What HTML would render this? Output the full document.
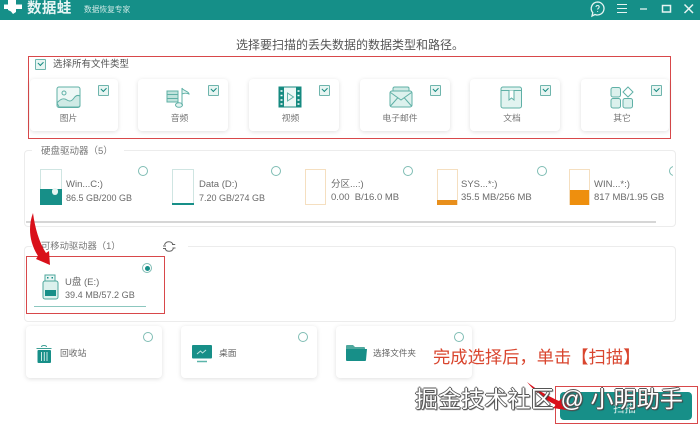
<!DOCTYPE html>
<html lang="zh-CN">
<head>
<meta charset="utf-8">
<style>
html,body{margin:0;padding:0;background:#fff}
#p{position:relative;width:700px;height:427px;overflow:hidden;background:#fff;font-family:"Liberation Sans","Noto Sans CJK SC",sans-serif;color:#666}
#p div,#p svg,#p span{position:absolute}
.t{white-space:nowrap;line-height:1.2}
.card{background:#fff;border-radius:4px;box-shadow:0 1px 5px rgba(0,0,0,.13)}
.cb{width:9px;height:9px;border:1px solid #6fb5ad;background:#e8f5f2;border-radius:1px}
.cb:after{content:"";position:absolute;left:2px;top:1px;width:4px;height:2.5px;border-left:1.2px solid #158a80;border-bottom:1.2px solid #158a80;transform:rotate(-45deg)}
.r{width:8px;height:8px;border:1px solid #7fbdb4;border-radius:50%;background:#fff}
.lab{font-size:8.8px;color:#777;text-align:center;width:60px;line-height:12px;top:112px}
.panel{border:1px solid #ececec;border-radius:4px;background:#fff;box-sizing:border-box}
.disk{width:22px;height:36px;box-sizing:border-box;border:1px solid #cfe5e2;background:#fff}
.d1{font-size:9.5px;color:#6a6a6a;line-height:12px}
.red{border:1.3px solid #d8484a;box-sizing:border-box}
</style>
</head>
<body>
<div id="p">
  <div style="left:0;top:0;width:700px;height:20px;background:#158f88"></div>
  <svg style="left:3px;top:0" width="20" height="15" viewBox="0 0 20 15"><path d="M5 0h8v4.500h6v4.500h-6v3l-3 2-2-2.500-3-1.500V9H1V4.500h4z" fill="#fff"/></svg>
  <div class="t" style="left:27px;top:0;font-size:14.5px;font-weight:bold;color:#e8f5f4;letter-spacing:.4px;line-height:19px">数据蛙</div>
  <div class="t" style="left:84px;top:4px;font-size:7.700px;color:#cfe9e6;line-height:11px">数据恢复专家</div>
  <svg style="left:588px;top:0" width="112" height="20" viewBox="0 0 112 20" fill="none" stroke="#e6f4f2" stroke-width="1.3">
    <path d="M9.500 2a6.500 6.500 0 1 1-2.500 12.500L4 16l.8-3.300A6.500 6.500 0 0 1 9.500 2z"/>
    <path d="M8 7c0-2 3.200-2 3.200 0 0 1.300-1.600 1.300-1.600 2.500M9.600 11v.9" stroke-width="1"/>
    <path d="M29 4.500h10M29 8.500h10M29 12.500h10" stroke-width="1.100"/>
    <path d="M52 9h7"/>
    <rect x="74.500" y="5.500" width="8" height="6.500" stroke-width="1.500"/>
    <path d="M96.500 4.500l8.500 8.500M105 4.500l-8.500 8.500" stroke-width="1.500"/>
  </svg>

  <div class="t" style="left:236px;top:38px;font-size:12px;color:#555;line-height:15px">选择要扫描的丢失数据的数据类型和路径。</div>

  <div class="red" style="left:28px;top:56px;width:643px;height:83px"></div>
  <div class="cb" style="left:35px;top:59px"></div>
  <div class="t" style="left:53px;top:59px;font-size:9.5px;color:#555;line-height:12px">选择所有文件类型</div>

  <div class="card" style="left:30px;top:79px;width:88px;height:52px"></div>
  <div class="card" style="left:138px;top:79px;width:90px;height:52px"></div>
  <div class="card" style="left:249px;top:79px;width:90px;height:52px"></div>
  <div class="card" style="left:360px;top:79px;width:90px;height:52px"></div>
  <div class="card" style="left:470px;top:79px;width:90px;height:52px"></div>
  <div class="card" style="left:581px;top:79px;width:88px;height:52px"></div>

  <div class="cb" style="left:98px;top:85px"></div>
  <div class="cb" style="left:208px;top:85px"></div>
  <div class="cb" style="left:319px;top:85px"></div>
  <div class="cb" style="left:430px;top:85px"></div>
  <div class="cb" style="left:540px;top:85px"></div>
  <div class="cb" style="left:651px;top:85px"></div>

  <svg style="left:56px;top:86px" width="26" height="23" viewBox="0 0 26 23" fill="none" stroke="#5fb0a6" stroke-width="1"><rect x="1" y="1" width="23" height="20.500" rx="2" fill="#eef8f6"/><circle cx="8" cy="7" r="2"/><path d="M1 17c4-5 7-5 10-3s5 1 7-2 4-3 6-2v9a2 2 0 0 1-2 2H3z" fill="#cfeae5"/></svg>
  <svg style="left:166px;top:86px" width="26" height="23" viewBox="0 0 26 23" fill="none" stroke="#5fb0a6" stroke-width="1"><rect x="1" y="5" width="11" height="11" fill="#bfe3dc"/><path d="M1 8.500h11M1 12.500h11"/><ellipse cx="13" cy="19" rx="3.500" ry="2.300" fill="#e4f4f1"/><path d="M16 19V2c1 3 7 3 7 6-2-1-5-1-7 0" fill="#e4f4f1"/></svg>
  <svg style="left:278px;top:86px" width="24" height="23" viewBox="0 0 24 23" fill="none"><rect x="1" y="1" width="22" height="20" fill="#eef8f6" stroke="#158a80"/><rect x="1" y="1" width="5" height="20" fill="#158a80"/><rect x="18" y="1" width="5" height="20" fill="#158a80"/><path d="M2.500 5h2M2.500 9.500h2M2.500 14h2M2.500 18h2M19.500 5h2M19.500 9.500h2M19.500 14h2M19.500 18h2" stroke="#fff" stroke-width="1.500"/><path d="M9.500 7l6 4-6 4z" stroke="#5fb0a6"/></svg>
  <svg style="left:389px;top:86px" width="24" height="23" viewBox="0 0 24 23" fill="none" stroke="#5fb0a6" stroke-width="1"><path d="M4 5V2.500A1.500 1.500 0 0 1 5.500 1h13A1.500 1.500 0 0 1 20 2.500V5" fill="#cfeae5"/><path d="M3 5h18a2 2 0 0 1 2 2v12a2 2 0 0 1-2 2H3a2 2 0 0 1-2-2V7a2 2 0 0 1 2-2z" fill="#dcf1ed"/><path d="M1.500 6.500L12 14l10.500-7.500M1.500 20l7.500-8.500M22.500 20L15 11.500"/></svg>
  <svg style="left:500px;top:86px" width="23" height="23" viewBox="0 0 23 23" fill="none" stroke="#5fb0a6" stroke-width="1"><rect x="1" y="1" width="20.500" height="21" rx="2" fill="#e2f3f0"/><path d="M1 4.500h20.500"/><path d="M9 4.500v9.500l2.500-2 2.500 2V4.500" fill="#fff"/></svg>
  <svg style="left:610px;top:86px" width="25" height="23" viewBox="0 0 25 23" fill="none" stroke="#5fb0a6" stroke-width="1"><rect x="1" y="1.500" width="9.500" height="9.500" rx="2" fill="#dcf1ed"/><path d="M18 1l5 5-5 5-5-5z" fill="#fff"/><rect x="1" y="12.500" width="9.500" height="9.500" rx="2" fill="#dcf1ed"/><rect x="13" y="12.500" width="9.500" height="9.500" rx="2" fill="#dcf1ed"/></svg>

  <div class="t lab" style="left:38.500px">图片</div>
  <div class="t lab" style="left:149.500px">音频</div>
  <div class="t lab" style="left:260.500px">视频</div>
  <div class="t lab" style="left:370px">电子邮件</div>
  <div class="t lab" style="left:482px">文档</div>
  <div class="t lab" style="left:592px">其它</div>

  <!-- hard disks -->
  <div class="panel" style="left:24px;top:150px;width:652px;height:77px"></div>
  <div style="left:32px;top:145px;width:92px;height:10px;background:#fff"></div>
  <div class="t" style="left:41px;top:145px;font-size:9.500px;color:#777;line-height:13px">硬盘驱动器（5）</div>
  <div style="left:26px;top:221px;width:630px;height:2px;background:#d6d6d6"></div>

  <div class="disk" style="left:40px;top:169px"></div>
  <div style="left:40px;top:189px;width:22px;height:16px;background:#178f88"></div>
  <div style="left:52px;top:188px;width:6px;height:7px;background:#e6f4f2;border-radius:3px"></div>
  <div class="r" style="left:138px;top:166px"></div>
  <div class="t d1" style="left:66px;top:179px">Win...C:)</div>
  <div class="t d1" style="left:66px;top:192px;font-size:9px">86.5 GB/200 GB</div>

  <div class="disk" style="left:172px;top:169px"></div>
  <div style="left:172px;top:203px;width:22px;height:2px;background:#178f88"></div>
  <div class="r" style="left:271px;top:166px"></div>
  <div class="t d1" style="left:199px;top:179px">Data (D:)</div>
  <div class="t d1" style="left:199px;top:192px;font-size:9px">7.20 GB/274 GB</div>

  <div class="disk" style="left:305px;top:169px;width:21px;border-color:#f5dfc0"></div>
  <div class="r" style="left:403px;top:166px"></div>
  <div class="t d1" style="left:331px;top:179px">分区...:)</div>
  <div class="t d1" style="left:331px;top:192px">0.00 &nbsp;B/16.0 MB</div>

  <div class="disk" style="left:437px;top:169px;width:21px;border-color:#f5dfc0"></div>
  <div style="left:437px;top:200px;width:20px;height:5px;background:#e88f1c"></div>
  <div class="r" style="left:537px;top:166px"></div>
  <div class="t d1" style="left:461px;top:179px">SYS...*:)</div>
  <div class="t d1" style="left:461px;top:192px">35.5 MB/256 MB</div>

  <div class="disk" style="left:569px;top:169px;width:21px;border-color:#f5dfc0"></div>
  <div style="left:570px;top:190px;width:19px;height:15px;background:#ee8f0e"></div>
  <div class="r" style="left:669px;top:166px"></div>
  <div style="left:673px;top:164px;width:20px;height:14px;background:#fff"></div>
  <div style="left:675px;top:164px;width:1px;height:14px;background:#ececec"></div>
  <div class="t d1" style="left:594px;top:179px">WIN...*:)</div>
  <div class="t d1" style="left:594px;top:192px">817 MB/1.95 GB</div>

  <!-- removable -->
  <div class="panel" style="left:24px;top:246px;width:652px;height:76px"></div>
  <div style="left:32px;top:240px;width:156px;height:10px;background:#fff"></div>
  <div class="t" style="left:41px;top:240px;font-size:9.300px;color:#777;line-height:13px">可移动驱动器（1）</div>
  <svg style="left:162px;top:240px" width="14" height="13" viewBox="0 0 14 13" fill="none" stroke="#666" stroke-width="1"><path d="M2.500 5A4.500 4.500 0 0 1 11 4.500M11.500 8A4.500 4.500 0 0 1 3 8.500"/><path d="M1 6h3M10 4.500h3.200M10.500 8h3M1 8.500h3" stroke-width=".9"/></svg>

  <div class="red" style="left:26px;top:256px;width:139px;height:58px;background:#fff"></div>
  <div style="left:142px;top:263px;width:10px;height:10px;border:1px solid #7fbdb4;border-radius:50%;box-sizing:border-box;background:#fff"></div>
  <div style="left:144.500px;top:265.500px;width:5px;height:5px;border-radius:50%;background:#178f88"></div>
  <svg style="left:41px;top:274px" width="19" height="26" viewBox="0 0 19 26" fill="none" stroke="#4ea79c" stroke-width="1"><rect x="4" y="1" width="10" height="7" fill="#eaf6f4"/><rect x="6" y="3" width="1.500" height="1.500" fill="#178f88" stroke="none"/><rect x="10.500" y="3" width="1.500" height="1.500" fill="#178f88" stroke="none"/><rect x="2" y="7" width="15" height="18" rx="2" fill="#dcf1ed"/><rect x="4" y="16" width="11" height="6" fill="#178f88" stroke="none"/></svg>
  <div class="t d1" style="left:65px;top:277px">U盘 (E:)</div>
  <div class="t d1" style="left:65px;top:289px;font-size:9.100px">39.4 MB/57.2 GB</div>
  <div style="left:34px;top:306px;width:112px;height:1px;background:#8cc7bf"></div>

  <!-- bottom cards -->
  <div class="card" style="left:26px;top:326px;width:136px;height:52px"></div>
  <div class="card" style="left:181px;top:326px;width:136px;height:52px"></div>
  <div class="card" style="left:336px;top:326px;width:136px;height:52px"></div>
  <div class="r" style="left:143px;top:332px"></div>
  <div class="r" style="left:298px;top:332px"></div>
  <div class="r" style="left:454px;top:332px"></div>
  <svg style="left:35px;top:344px" width="18" height="20" viewBox="0 0 18 20" fill="none"><path d="M1.500 4.500h15M6.500 3c0-2 5-2 5 0" stroke="#3d9f95" stroke-width="1"/><rect x="2.500" y="6" width="13.500" height="13" rx="1" fill="#178f88"/><path d="M6.500 8v9M9.300 8v9M12 8v9" stroke="#cdeae6" stroke-width="1"/></svg>
  <div class="t" style="left:60px;top:347px;font-size:8.800px;color:#666;line-height:12px">回收站</div>
  <svg style="left:192px;top:345px" width="20" height="19" viewBox="0 0 20 19" fill="none"><rect x="0" y="0" width="20" height="13.500" rx="1" fill="#178f88"/><path d="M5 9l3.500-3 2 2L14 5" stroke="#bfe5e0" stroke-width="1"/><path d="M5 16.500h10" stroke="#5cb5aa" stroke-width="1.500"/></svg>
  <div class="t" style="left:219px;top:347px;font-size:8.800px;color:#666;line-height:12px">桌面</div>
  <svg style="left:346px;top:344px" width="22" height="18" viewBox="0 0 22 18"><path d="M0 2a1 1 0 0 1 1-1h6l2 2h9a1 1 0 0 1 1 1v2H0z" fill="#4fa89e"/><path d="M0 5h21l-1 11a1 1 0 0 1-1 1H1a1 1 0 0 1-1-1z" fill="#178f88"/></svg>
  <div class="t" style="left:373px;top:348px;font-size:8.600px;color:#666;line-height:11px">选择文件夹</div>

  <!-- scan button -->
  <div style="left:560px;top:392px;width:132px;height:28px;background:#178f88;border-radius:4px"></div>
  <div class="t" style="left:613px;top:402px;font-size:11.500px;color:#d8efec;line-height:14px">扫描</div>
  <div class="red" style="left:555px;top:386px;width:143px;height:38px"></div>

  <div class="t" style="left:433px;top:347px;font-size:17.300px;color:#d9452e;line-height:20px">完成选择后，单击【扫描】</div>

  <!-- red arrows -->
  <svg style="left:26px;top:210px" width="30" height="58" viewBox="0 0 30 58"><path d="M7 3C2 16 3 32 12 46L10 49 24 55 23 41 20 43C13 32 9 18 7 3z" fill="#d9101a"/></svg>
  <svg style="left:525px;top:380px" width="50" height="35" viewBox="0 0 50 35"><path d="M2 2C10 12 20 20 31 25L28 28 47 31 37 18 34 21C23 16 12 10 2 2z" fill="#d9101a"/></svg>

  <!-- watermark -->
  <div class="t" style="left:415px;top:386px;font-size:23px;color:#fff;line-height:26px;letter-spacing:.15px;text-shadow:-1px 0 #555,1px 0 #555,0 -1px #555,0 1px #555,1px 1px 1px #333">掘金技术社区 @ 小明助手</div>
</div>
</body>
</html>
